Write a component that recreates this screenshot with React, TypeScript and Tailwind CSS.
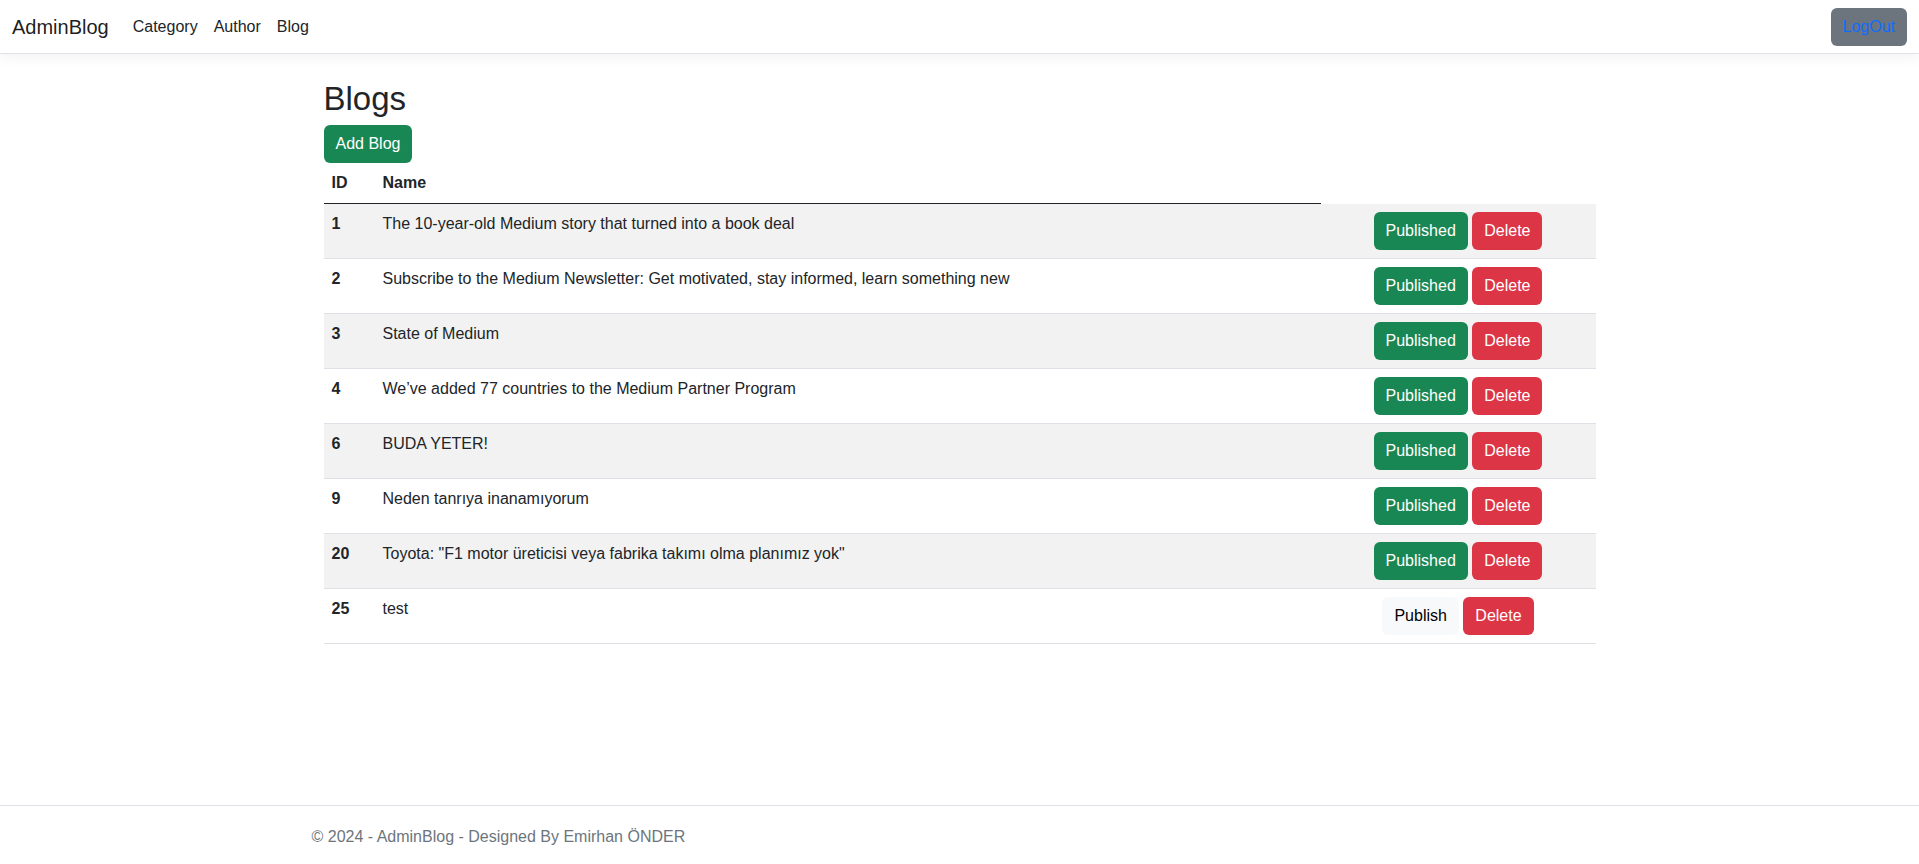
import React from 'react';

type Blog = { id: number; name: string; published: boolean };

const blogs: Blog[] = [
  { id: 1, name: 'The 10-year-old Medium story that turned into a book deal', published: true },
  { id: 2, name: 'Subscribe to the Medium Newsletter: Get motivated, stay informed, learn something new', published: true },
  { id: 3, name: 'State of Medium', published: true },
  { id: 4, name: 'We\u2019ve added 77 countries to the Medium Partner Program', published: true },
  { id: 6, name: 'BUDA YETER!', published: true },
  { id: 9, name: 'Neden tanrıya inanamıyorum', published: true },
  { id: 20, name: 'Toyota: "F1 motor üreticisi veya fabrika takımı olma planımız yok"', published: true },
  { id: 25, name: 'test', published: false },
];

// bootstrap-ish button base
const btn = 'inline-block h-[38px] px-3 rounded-[6px] text-base leading-[38px] align-middle';

const Navbar = () => (
  <nav className="h-[54px] bg-white border-b border-[#dee2e6] shadow-[0_4px_12px_rgba(0,0,0,0.05)] flex items-center px-3">
    <a className="text-[20px] leading-[30px] text-[rgba(0,0,0,0.9)] mr-4">AdminBlog</a>
    <div className="flex">
      {['Category', 'Author', 'Blog'].map((l) => (
        <a key={l} className="px-2 text-[#212529] leading-6">
          {l}
        </a>
      ))}
    </div>
    <div className="ml-auto">
      <button className={`${btn} bg-[#6c757d] text-[#0d6efd]`}>LogOut</button>
    </div>
  </nav>
);

const BlogTable = () => (
  <table className="table-fixed border-collapse w-[1272px]">
    <colgroup>
      <col className="w-[51px]" />
      <col className="w-[946px]" />
      <col className="w-[275px]" />
    </colgroup>
    <thead>
      <tr>
        <th className="p-2 text-left font-bold border-b border-[#212529]">ID</th>
        <th className="p-2 text-left font-bold border-b border-[#212529]">Name</th>
      </tr>
    </thead>
    <tbody>
      {blogs.map((b, i) => (
        <tr key={b.id} className={`border-b border-[#dee2e6] ${i % 2 === 0 ? 'bg-[#f2f2f2]' : 'bg-white'}`}>
          <td className="p-2 align-top font-bold">{b.id}</td>
          <td className="p-2 align-top">{b.name}</td>
          <td className="p-2 align-top text-center whitespace-nowrap">
            {b.published ? (
              <button className={`${btn} bg-[#198754] text-white`}>Published</button>
            ) : (
              <button className={`${btn} bg-[#f8f9fa] text-black`}>Publish</button>
            )}{' '}
            <button className={`${btn} bg-[#dc3545] text-white`}>Delete</button>
          </td>
        </tr>
      ))}
    </tbody>
  </table>
);

export default function App() {
  return (
    <div className="min-h-screen flex flex-col bg-white text-[#212529] text-base leading-6 font-['Segoe_UI','Liberation_Sans',sans-serif]">
      <Navbar />
      <main className="mx-auto w-[1320px] px-6 pt-4">
        <h1 className="text-[33px] pt-[9px] leading-[39px] mb-[7px]">Blogs</h1>
        <button className={`${btn} bg-[#198754] text-white`}>Add Blog</button>
        <BlogTable />
      </main>
      {/* footer */}
      <footer className="mt-auto h-[59px] border-t border-[#dee2e6]">
        <div className="mx-auto w-[1320px] px-3 pt-[3px] leading-[55px] text-[#6c757d] whitespace-nowrap">
          © 2024 - AdminBlog - Designed By Emirhan ÖNDER
        </div>
      </footer>
    </div>
  );
}
